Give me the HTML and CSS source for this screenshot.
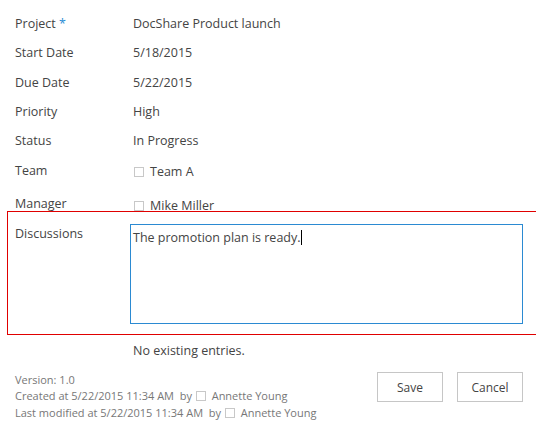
FILE: index.html
```html
<!DOCTYPE html>
<html>
<head>
<meta charset="utf-8">
<link rel="stylesheet" href="styles.css">
</head>
<body>
<div class="form">
  <div class="row"><div class="label">Project <span class="req">*</span></div><div class="value">DocShare Product launch</div></div>
  <div class="row"><div class="label">Start Date</div><div class="value">5/18/2015</div></div>
  <div class="row"><div class="label">Due Date</div><div class="value">5/22/2015</div></div>
  <div class="row"><div class="label">Priority</div><div class="value">High</div></div>
  <div class="row"><div class="label">Status</div><div class="value">In Progress</div></div>
  <div class="row"><div class="label">Team</div><div class="value user"><span class="box"></span>Team A</div></div>
  <div class="row row-last"><div class="label">Manager</div><div class="value user"><span class="box"></span>Mike Miller</div></div>
  <div class="error-zone">
    <div class="label disc-label">Discussions</div>
    <div class="textarea">The promotion plan is ready.<span class="caret"></span></div>
  </div>
  <div class="entries">No existing entries.</div>
  <div class="footer">
    <div class="meta">
      <div>Version: 1.0</div>
      <div>Created at 5/22/2015 11:34 AM&nbsp; by <span class="box small"></span> Annette Young</div>
      <div>Last modified at 5/22/2015 11:34 AM&nbsp; by <span class="box small"></span> Annette Young</div>
    </div>
    <div class="buttons">
      <button class="btn">Save</button>
      <button class="btn">Cancel</button>
    </div>
  </div>
</div>
</body>
</html>
```
FILE: styles.css
```css
html, body {
  margin: 0;
  padding: 0;
  background: #fff;
}
body {
  font-family: "Open Sans", "Noto Sans", sans-serif;
  font-size: 12.5px;
  color: #444;
  overflow: hidden;
}
.form {
  padding-top: 9.5px;
  width: 536px;
}
.row {
  display: flex;
  align-items: center;
  height: 29.3px;
  padding-left: 15px;
}
.row-last {
  height: 28px;
  margin-bottom: -2px;
  align-items: flex-end;
}
.label {
  width: 118px;
  flex: none;
  line-height: 18px;
}
.value { line-height: 18px; }
.req { color: #2a8dd4; }
.user {
  display: flex;
  align-items: center;
  position: relative;
  top: 1.5px;
}
.box {
  display: inline-block;
  width: 8px;
  height: 8px;
  border: 1px solid #c8c8c8;
  margin-right: 6px;
  margin-left: 1px;
}
.box.small {
  margin: 0 3px 0 1px;
  vertical-align: -1px;
}
.error-zone {
  position: relative;
  margin-left: 7px;
  border: 1px solid #e00000;
  border-right: none;
  height: 124px;
  display: flex;
  padding-left: 7px;
  padding-top: 12px;
  box-sizing: border-box;
  background: #fff;
}
.disc-label {
  width: 115px;
  padding-top: 1px;
}
.textarea {
  width: 393px;
  height: 100px;
  border: 1px solid #2b8ad2;
  padding: 4px 2px;
  box-sizing: border-box;
  line-height: 18px;
  color: #444;
}
.caret {
  display: inline-block;
  width: 1px;
  height: 15px;
  background: #000;
  vertical-align: -3px;
}
.entries {
  padding-left: 133px;
  margin-top: 7px;
  line-height: 18px;
}
.footer {
  display: flex;
  justify-content: space-between;
  padding-left: 15px;
  padding-right: 13px;
  margin-top: 11.5px;
}
.meta {
  color: #777;
  font-size: 11px;
  line-height: 16.5px;
}
.buttons {
  display: flex;
  gap: 14px;
  padding-top: 0.5px;
}
.btn {
  width: 66px;
  height: 30px;
  border: 1px solid #c6c6c6;
  background: #fff;
  font-family: inherit;
  font-size: 12px;
  color: #444;
  padding: 0;
}
```
